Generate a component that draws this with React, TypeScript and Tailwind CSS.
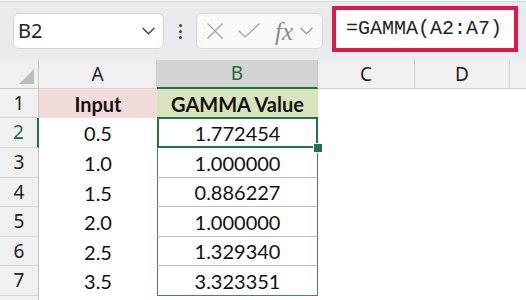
import React from "react";

const rowHeights = [29, 30, 30, 29, 30, 29, 30];
const dataA = ["0.5", "1.0", "1.5", "2.0", "2.5", "3.5"];
const dataB = ["1.772454", "1.000000", "0.886227", "1.000000", "1.329340", "3.323351"];

function Chevron({ className }: { className?: string }) {
  return (
    <svg viewBox="0 0 14 8" className={className} fill="none" stroke="currentColor" strokeWidth="1.4" strokeLinecap="round" strokeLinejoin="round">
      <path d="M1 1 L7 7 L13 1" />
    </svg>
  );
}

export default function App() {
  const cellFont = "font-['Lato','Noto_Sans',sans-serif]";
  const hdrFont = "font-['Noto_Sans','Open_Sans',sans-serif]";
  return (
    <div className="w-[526px] h-[300px] overflow-hidden bg-white flex flex-col">
      {/* Toolbar */}
      <div className="h-[60px] shrink-0 bg-[#e8ebee] flex flex-col">
        <div className="h-[1px] bg-[#f6f7f8]" />
        <div className="h-[1px] bg-[#d5d8dc]" />
        <div className="flex items-start pt-[4px]">
          {/* Name box */}
          <div className="ml-[13px] mt-[7px] w-[151px] h-[36px] rounded-[6px] border border-[#d2d4d7] bg-white flex items-center justify-between pl-[4px] pr-[8px]">
            <span className={`text-[20px] text-[#222] ${hdrFont} leading-none`}>B2</span>
            <Chevron className="w-[13px] h-[8px] text-[#4a3b30]" />
          </div>
          {/* dots */}
          <div className="w-[32px] mt-[7px] h-[36px] flex flex-col items-center justify-center gap-[3px]">
            <div className="w-[3px] h-[3px] rounded-full bg-[#4a4038]" />
            <div className="w-[3px] h-[3px] rounded-full bg-[#4a4038]" />
            <div className="w-[3px] h-[3px] rounded-full bg-[#4a4038]" />
          </div>
          {/* formula buttons */}
          <div className="mt-[7px] w-[127px] h-[36px] rounded-[6px] border border-[#d8dadd] bg-[#f9f9f9] flex items-center pl-[9px]">
            <svg viewBox="0 0 18 18" className="w-[18px] h-[18px] text-[#a6a6a6]" fill="none" stroke="currentColor" strokeWidth="1.3" strokeLinecap="round">
              <path d="M2 2 L16 16 M16 2 L2 16" />
            </svg>
            <svg viewBox="0 0 22 16" className="ml-[14px] w-[22px] h-[16px] text-[#a6a6a6]" fill="none" stroke="currentColor" strokeWidth="1.3" strokeLinecap="round" strokeLinejoin="round">
              <path d="M1 8 L7 14 L21 1" />
            </svg>
            <span className="ml-[15px] text-[25px] italic text-[#8c8c8c] font-['Liberation_Serif',serif] leading-none">fx</span>
            <Chevron className="ml-[7px] w-[13px] h-[8px] text-[#9a9a9a]" />
          </div>
          {/* formula bar (highlighted) */}
          <div className="ml-[9px] w-[186px] h-[46px] border-4 border-[#e0184a] bg-white flex items-center pl-[10px]">
            <span className="text-[20px] text-[#222] font-['Liberation_Mono',monospace] leading-none whitespace-nowrap">=GAMMA(A2:A7)</span>
          </div>
        </div>
      </div>

      {/* Sheet */}
      <div className="grid grid-cols-[39px_118px_161px_97px_95px_16px] grid-rows-[29px_29px_30px_30px_29px_30px_29px_30px_4px]">
        {/* Header row */}
        <div className="bg-[#f0f0f0] border-r border-b border-[#c9c9c9] relative">
          <svg viewBox="0 0 20 20" className="absolute right-[4px] bottom-[4px] w-[15px] h-[15px]">
            <path d="M20 0 L20 20 L0 20 Z" fill="#bdbdbd" />
          </svg>
        </div>
        <div className={`bg-[#f0f0f0] border-r border-b border-[#d0d0d0] flex items-center justify-center text-[19px] text-[#222] ${hdrFont}`}>A</div>
        <div className={`bg-[#d4d4d4] border-r border-[#c4c4c4] border-b-2 border-b-[#217346] flex items-center justify-center text-[19px] text-[#1e6b3f] ${hdrFont}`}>B</div>
        <div className={`bg-[#f0f0f0] border-r border-b border-[#d0d0d0] flex items-center justify-center text-[19px] text-[#222] ${hdrFont}`}>C</div>
        <div className={`bg-[#f0f0f0] border-r border-b border-[#d0d0d0] flex items-center justify-center text-[19px] text-[#222] ${hdrFont}`}>D</div>
        <div className="bg-[#f0f0f0] border-b border-[#d0d0d0]" />

        {/* Rows */}
        {rowHeights.map((_, i) => {
          const r = i + 1;
          const isHeader = r === 1;
          const isSel = r === 2;
          const isLast = r === 7;
          return (
            <React.Fragment key={r}>
              <div
                className={`bg-[#f0f0f0] border-b border-[#d6d6d6] flex items-center justify-center text-[19px] ${hdrFont} ${
                  isSel ? "border-r-2 border-r-[#217346] text-[#1e6b3f]" : "border-r border-r-[#c9c9c9] text-[#222]"
                }`}
              >
                {r}
              </div>
              <div
                className={`flex items-center justify-center text-[20px] text-[#111] ${cellFont} ${
                  isHeader ? "bg-[#f2dcdb] font-bold" : "bg-white"
                }`}
              >
                {isHeader ? "Input" : dataA[i - 1]}
              </div>
              <div
                className={`relative flex items-center justify-center text-[20px] text-[#111] ${cellFont} ${
                  isHeader
                    ? "bg-[#d8e4bc] font-bold"
                    : `bg-white border-l border-r border-[#4472c4] ${isLast ? "border-b border-b-[#4472c4]" : "border-b border-b-[#bfbfbf]"}`
                } ${isSel ? "z-10" : ""}`}
              >
                {isHeader ? "GAMMA Value" : dataB[i - 1]}
                {isSel && (
                  <>
                    <div className="absolute -left-[1px] -top-[1px] -right-[1px] -bottom-[1px] border-2 border-[#217346]" />
                    <div className="absolute -right-[6px] -bottom-[6px] w-[10px] h-[10px] bg-[#217346] border-[1.5px] border-white" />
                  </>
                )}
              </div>
              <div className="bg-white" />
              <div className="bg-white" />
              <div className="bg-white" />
            </React.Fragment>
          );
        })}
        <div className="bg-[#f0f0f0] border-r border-[#c9c9c9]" />
        <div className="bg-white" />
        <div className="bg-white" />
        <div className="bg-white" />
        <div className="bg-white" />
        <div className="bg-white" />
      </div>
    </div>
  );
}
